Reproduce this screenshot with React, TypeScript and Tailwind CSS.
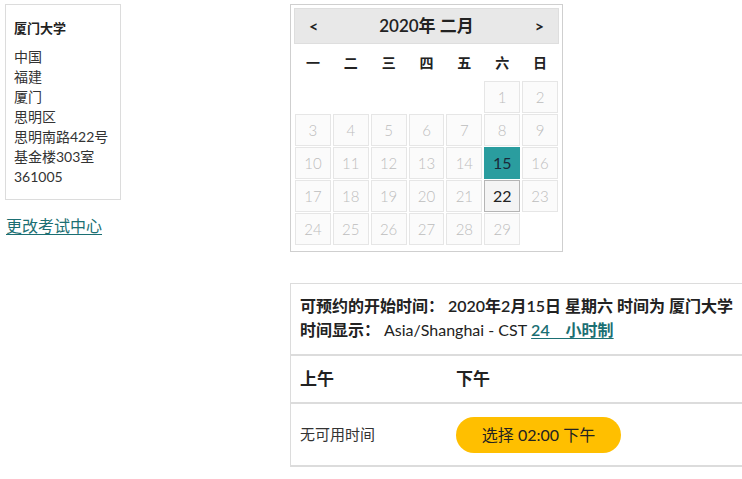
import React from 'react';

const FONT = '"Lato", "Noto Sans CJK SC", sans-serif';
const WEEKDAYS = ['一', '二', '三', '四', '五', '六', '日'];
const ADDRESS = ['中国', '福建', '厦门', '思明区', '思明南路422号', '基金楼303室', '361005'];

// Feb 2020 starts on Saturday (index 5 with Monday first)
const cells: (number | null)[] = [
  ...Array.from({ length: 5 }, () => null),
  ...Array.from({ length: 29 }, (_, i) => i + 1),
];

function DayCell({ day }: { day: number | null }) {
  if (day === null) return <div className="h-[32px]" />;
  if (day === 15) {
    return (
      <div className="h-[32px] flex items-center justify-center bg-[#2a9d9f] border border-[#2a9d9f] text-[#1a2a3a] text-[16px]">
        {day}
      </div>
    );
  }
  if (day === 22) {
    return (
      <div className="h-[32px] flex items-center justify-center bg-[#f4f4f4] border border-[#b5b5b5] text-[#222] text-[16px]">
        {day}
      </div>
    );
  }
  return (
    <div className="h-[32px] flex items-center justify-center bg-[#fbfbfb] border border-[#e6e6e6] text-[#bdbdbd] text-[15px] font-light">
      {day}
    </div>
  );
}

export default function App() {
  return (
    <div className="w-[742px] h-[479px] overflow-hidden bg-white text-[#222] flex" style={{ fontFamily: FONT }}>
      {/* Left: test centre */}
      <div className="w-[290px] shrink-0 pl-[5px] pt-[4px]">
        <div className="w-[116px] border border-[#dcdcdc] px-[8px] pt-[14px] pb-[12px]">
          <div className="text-[13px] font-bold leading-[18px]">厦门大学</div>
          <div className="mt-[10px] text-[14px] leading-[20px] text-[#333]">
            {ADDRESS.map((l) => (
              <div key={l}>{l}</div>
            ))}
          </div>
        </div>
        <a href="#" className="inline-block mt-[14px] ml-[1px] text-[16px] text-[#1b6f73] underline underline-offset-2">
          更改考试中心
        </a>
      </div>

      {/* Right: calendar + times */}
      <div className="pt-[4px] flex flex-col">
        <div className="w-[273px] border border-[#cfcfcf] p-[3px] pb-[6px]">
          <div className="h-[36px] bg-[#e8e8e8] border border-[#dedede] flex items-center justify-between px-[14px]">
            <span className="text-[16px] font-bold">&lt;</span>
            <span className="text-[17px] font-semibold">2020年 二月</span>
            <span className="text-[16px] font-bold">&gt;</span>
          </div>
          <div className="grid grid-cols-7 h-[37px] items-center text-[14px] font-bold">
            {WEEKDAYS.map((w) => (
              <div key={w} className="text-center">{w}</div>
            ))}
          </div>
          <div className="grid grid-cols-7 gap-x-[2px] gap-y-[1px] pl-[1px] pr-[1px]">
            {cells.map((d, i) => (
              <DayCell key={i} day={d} />
            ))}
          </div>
        </div>

        <div className="mt-[31px] w-[470px] border-l border-t border-[#dcdcdc]">
          <div className="px-[9px] pt-[10px] pb-[12px] text-[16px] leading-[24px] font-semibold">
            <div className="whitespace-nowrap">可预约的开始时间： 2020年2月15日 星期六 时间为 厦门大学</div>
            <div className="whitespace-nowrap">
              时间显示： <span className="font-normal">Asia/Shanghai - CST</span>{' '}
              <a href="#" className="text-[#1b6f73] underline underline-offset-2">24&nbsp;&nbsp;&nbsp;&nbsp;小时制</a>
            </div>
          </div>
          <div className="border-t-2 border-[#dcdcdc] h-[48px] flex items-center px-[9px] text-[17px] font-bold">
            <div className="w-[156px]">上午</div>
            <div>下午</div>
          </div>
          <div className="border-t-2 border-b-2 border-[#dcdcdc] h-[65px] flex items-center px-[9px]">
            <div className="w-[156px] text-[15px] text-[#333]">无可用时间</div>
            <button className="h-[36px] w-[165px] rounded-full bg-[#ffbf00] text-[16px] text-[#222]">
              选择 02:00 下午
            </button>
          </div>
        </div>
      </div>
    </div>
  );
}
